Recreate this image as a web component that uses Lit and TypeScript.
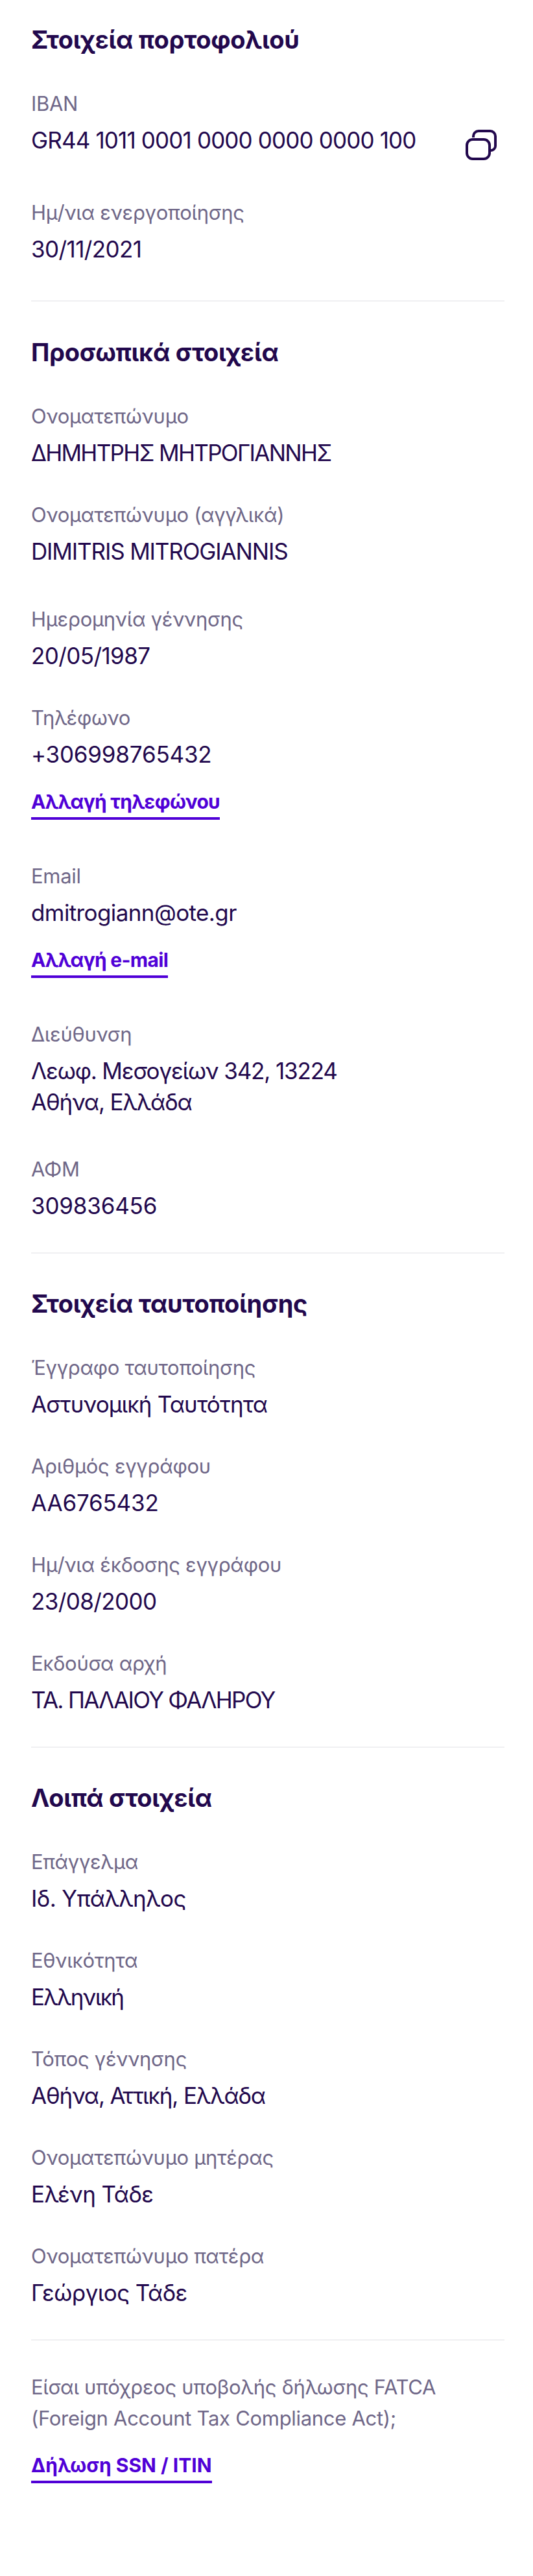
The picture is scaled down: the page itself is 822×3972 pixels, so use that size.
import { LitElement, html, css } from "lit";
import { customElement } from "lit/decorators.js";

const copyIcon = html`<svg class="copy" viewBox="0 0 48 47" width="48" height="47" fill="none" stroke="#22084d" stroke-width="4">
  <path d="M12 12V10a8 8 0 0 1 8-8h18a8 8 0 0 1 8 8v15a7 7 0 0 1-7 7"/>
  <rect x="2" y="15" width="35" height="30" rx="9"/>
</svg>`;

interface F { l: string; v: string | string[]; link?: string; icon?: boolean; cls?: string; far?: boolean }
const s1: F[] = [
  { l: "IBAN", v: "GR44 1011 0001 0000 0000 0000 100", icon: true, cls: "t1" },
  { l: "Ημ/νια ενεργοποίησης", v: "30/11/2021" },
];
const s2: F[] = [
  { l: "Ονοματεπώνυμο", v: "ΔΗΜΗΤΡΗΣ ΜΗΤΡΟΓΙΑΝΝΗΣ", cls: "t2" },
  { l: "Ονοματεπώνυμο (αγγλικά)", v: "DIMITRIS MITROGIANNIS", cls: "t3" },
  { l: "Ημερομηνία γέννησης", v: "20/05/1987", far: true },
  { l: "Τηλέφωνο", v: "+306998765432", link: "Αλλαγή τηλεφώνου", cls: "t0" },
  { l: "Email", v: "dmitrogiann@ote.gr", link: "Αλλαγή e-mail" },
  { l: "Διεύθυνση", v: ["Λεωφ. Μεσογείων 342, 13224", "Αθήνα, Ελλάδα"], cls: "t3" },
  { l: "ΑΦΜ", v: "309836456", far: true, cls: "t0" },
];
const s3: F[] = [
  { l: "Έγγραφο ταυτοποίησης", v: "Αστυνομική Ταυτότητα", cls: "t1" },
  { l: "Αριθμός εγγράφου", v: "ΑΑ6765432", cls: "t0" },
  { l: "Ημ/νια έκδοσης εγγράφου", v: "23/08/2000" },
  { l: "Εκδούσα αρχή", v: "ΤΑ. ΠΑΛΑΙΟΥ ΦΑΛΗΡΟΥ", cls: "t2" },
];
const s4: F[] = [
  { l: "Επάγγελμα", v: "Ιδ. Υπάλληλος" },
  { l: "Εθνικότητα", v: "Ελληνική", cls: "t2" },
  { l: "Τόπος γέννησης", v: "Αθήνα, Αττική, Ελλάδα", cls: "t3" },
  { l: "Ονοματεπώνυμο μητέρας", v: "Ελένη Τάδε" },
  { l: "Ονοματεπώνυμο πατέρα", v: "Γεώργιος Τάδε" },
];

@customElement("app-root")
export class AppRoot extends LitElement {
  static styles = css`
    :host { display: block; background: #fff; min-height: 3972px; font-family: Inter, "Noto Sans", sans-serif; color: #22084d; }
    .page { padding: 37px 44px 0 48px; }
    .section { padding-bottom: 48px; border-bottom: 2px solid #f0f0f2; margin-bottom: 53px; }
    .section.first { padding-bottom: 55px; margin-bottom: 54px; }
    .section.before-q { margin-bottom: 48px; }
    .section.last { border: 0; margin: 0; padding: 0; }
    h2 { margin: 0 0 55px; font-size: 38px; line-height: 48px; font-weight: 700; letter-spacing: -0.3px; }
    .field { margin-top: 52px; }
    h2 + .field { margin-top: 0; }
    .field.far { margin-top: 61px; }
    .field.far.tight { margin-top: 60px; }
    .field.linked { margin-bottom: 67px; }
    .field.linked + .field { margin-top: 0; }
    .label { font-size: 31px; line-height: 40px; color: #6f6788; letter-spacing: -0.3px; }
    .value { font-size: 35px; line-height: 48px; margin-top: 12px; letter-spacing: -0.6px; }
    .t0 { letter-spacing: -0.2px; }
    .t1 { letter-spacing: -0.85px; }
    .t2 { letter-spacing: -1.7px; }
    .t3 { letter-spacing: -1.15px; }
    .row { display: flex; justify-content: space-between; align-items: flex-start; height: 64px; padding-right: 12px; }
    .copy { display: block; margin-top: 8px; flex: none; }
    .links { display: block; margin-top: 29px; }
    a { display: inline-block; font-size: 30px; line-height: 40px; font-weight: 700; letter-spacing: -0.7px; color: #5000d7; text-decoration: none; border-bottom: 4px solid #5000d7; padding-bottom: 4px; }
    a.wide { letter-spacing: 0; }
    .q { font-size: 31px; line-height: 48px; color: #6f6788; letter-spacing: -0.3px; }
    .section.last .links { margin-top: 28px; }
  `;
  field(f: F) {
    const v = Array.isArray(f.v) ? f.v.map((x) => html`<div>${x}</div>`) : f.v;
    return html`<div class="field ${f.far ? "far" : ""} ${f.l === "ΑΦΜ" ? "tight" : ""} ${f.link ? "linked" : ""}">
      <div class="label">${f.l}</div>
      <div class="value ${f.icon ? "row" : ""} ${f.cls ?? ""}"><span>${v}</span>${f.icon ? copyIcon : ""}</div>
      ${f.link ? html`<div class="links"><a href="#">${f.link}</a></div>` : ""}
    </div>`;
  }
  render() {
    return html`<div class="page">
      <div class="section first"><h2>Στοιχεία πορτοφολιού</h2>${s1.map((f) => this.field(f))}</div>
      <div class="section"><h2>Προσωπικά στοιχεία</h2>${s2.map((f) => this.field(f))}</div>
      <div class="section"><h2>Στοιχεία ταυτοποίησης</h2>${s3.map((f) => this.field(f))}</div>
      <div class="section before-q"><h2>Λοιπά στοιχεία</h2>${s4.map((f) => this.field(f))}</div>
      <div class="section last">
        <div class="q">Είσαι υπόχρεος υποβολής δήλωσης FATCA<br />(Foreign Account Tax Compliance Act);</div>
        <div class="links"><a class="wide" href="#">Δήλωση SSN / ITIN</a></div>
      </div>
    </div>`;
  }
}
